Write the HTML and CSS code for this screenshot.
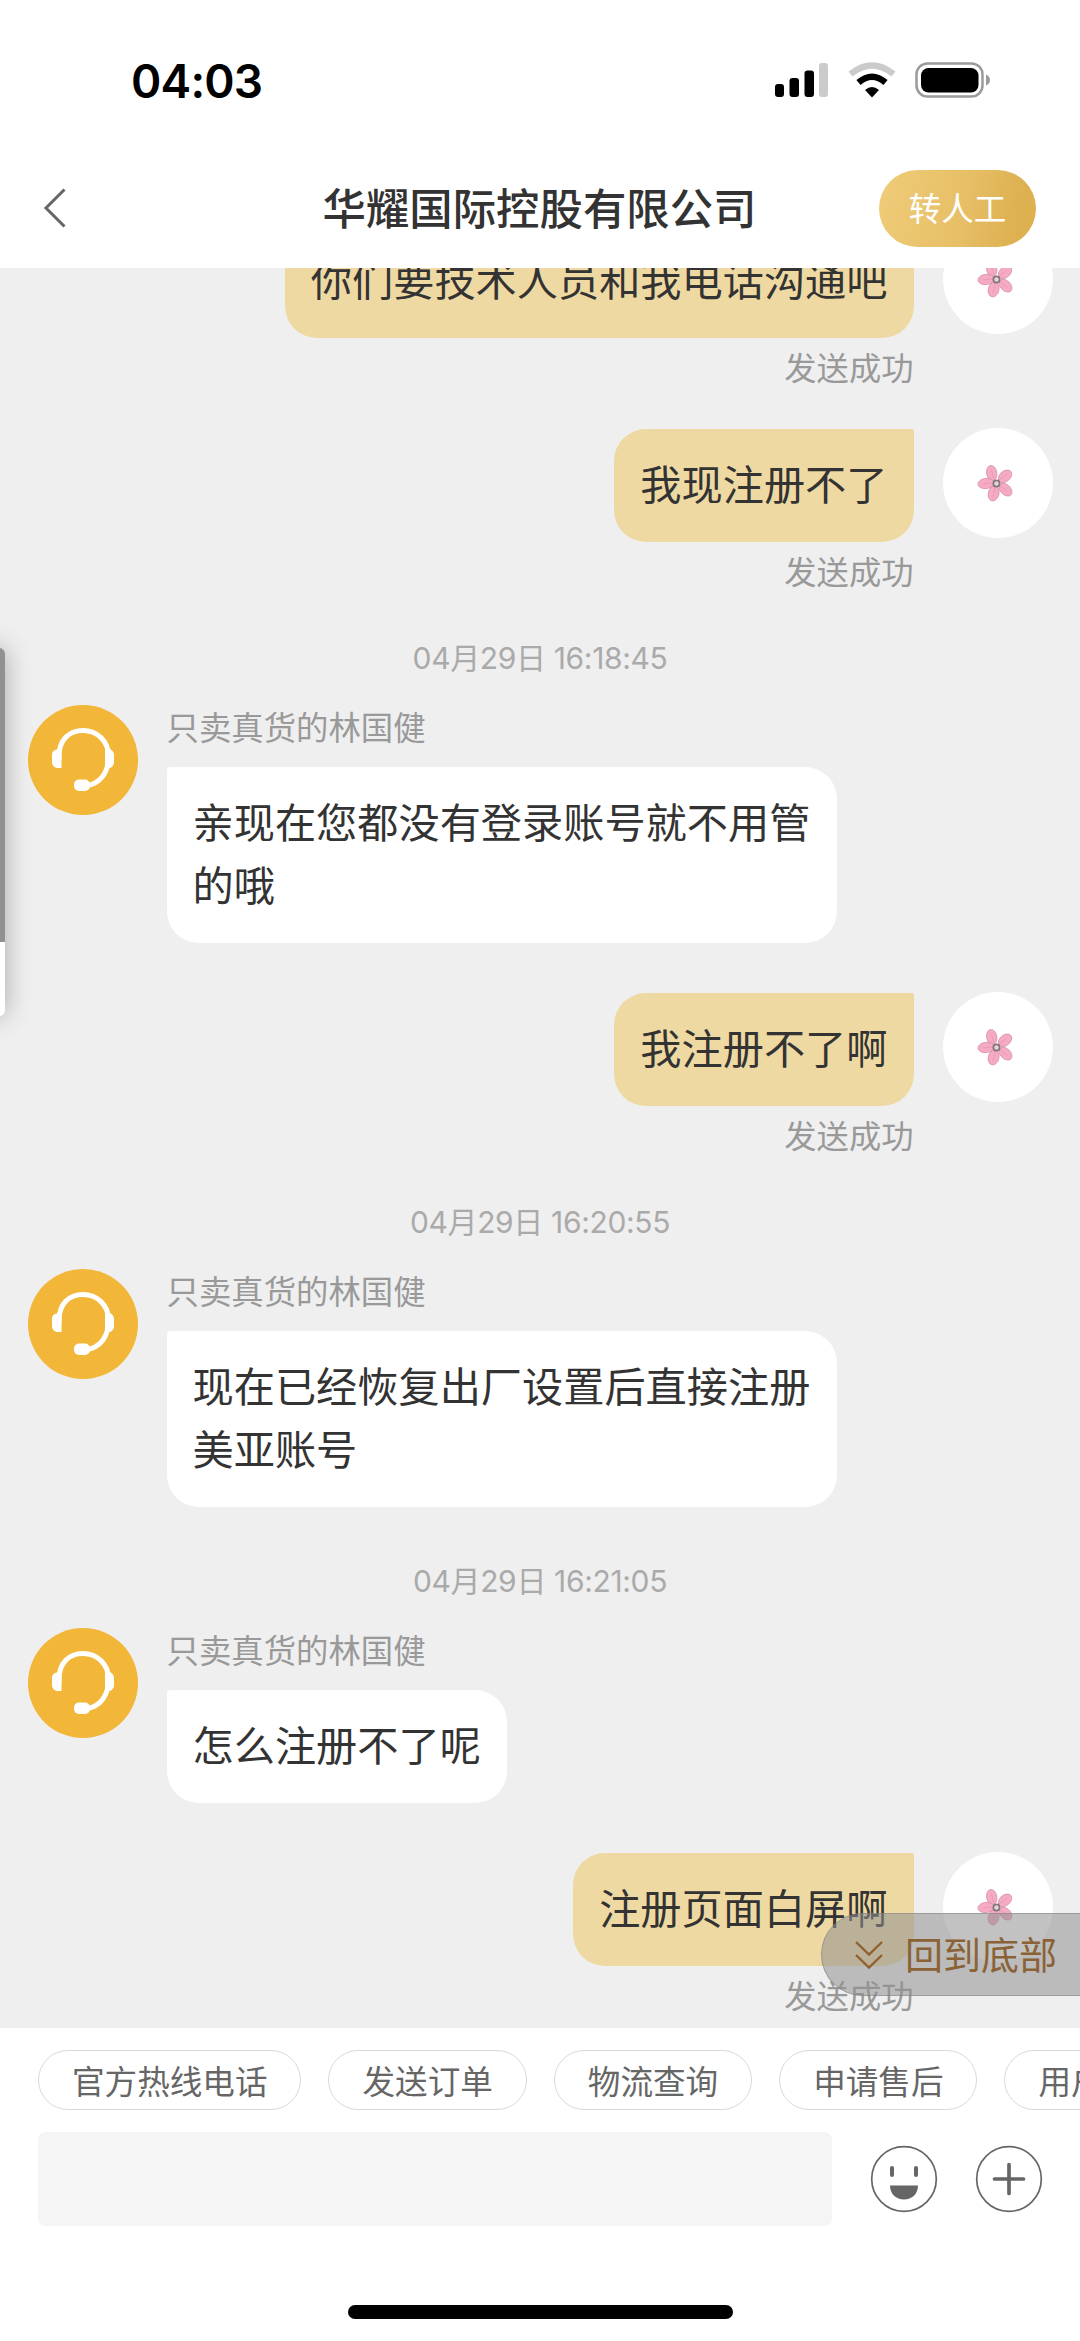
FILE: index.html
```html
<!DOCTYPE html>
<html lang="zh-CN">
<head>
<meta charset="utf-8">
<title>华耀国际控股有限公司</title>
<link rel="stylesheet" href="styles.css">
</head>
<body>
<svg class="defs" aria-hidden="true">
  <symbol id="headset" viewBox="0 0 110 110">
    <path d="M31 55V51C31 35 41 25.500 55 25.500S80.500 36 80.500 51C80.500 67 73 79 57 81" fill="none" stroke="#fff" stroke-width="5"/>
    <path d="M33.500 44V63H29Q24 62 24 57V50Q24 45 29 44.500ZM77 44H82Q86 46 86 50V57Q86 61 82 63H77Z" fill="#fff"/>
    <rect x="46" y="74.500" width="16" height="11.500" rx="5" fill="#fff"/>
  </symbol>
  <symbol id="flower" viewBox="0 0 40 40">
    <g fill="#f5abc3" stroke="#d58fa6" stroke-width=".8">
      <ellipse cx="15.500" cy="9.500" rx="5.400" ry="8" transform="rotate(-10 15.500 9.500)"/>
      <ellipse cx="29.500" cy="13" rx="5.500" ry="8" transform="rotate(50 29.500 13)"/>
      <ellipse cx="30" cy="27" rx="5.300" ry="8" transform="rotate(-46 30 27)"/>
      <ellipse cx="17.500" cy="31" rx="5.600" ry="8" transform="rotate(14 17.500 31)"/>
      <ellipse cx="9.500" cy="20.500" rx="5.400" ry="8.500" transform="rotate(84 9.500 20.500)"/>
    </g>
    <g stroke="#e797b0" stroke-width=".8" fill="none"><path d="M15 6L18 16M31 11L23 17M32 29L23 22M17 35L19 24M6 21L17 20"/></g>
    <circle cx="20.500" cy="20.500" r="3.300" fill="#e2d5da" stroke="#85727a" stroke-width="1.800"/>
  </symbol>
</svg>
<div class="screen">
  <header class="top">
    <div class="status-bar">
      <span class="clock">04:03</span>
      <svg class="indicators" width="218" height="38" viewBox="0 0 218 38">
        <rect x="1" y="22" width="9" height="13" rx="3"/>
        <rect x="15.500" y="16" width="9.500" height="19" rx="3"/>
        <rect x="30.500" y="8.500" width="9.500" height="26.500" rx="3"/>
        <rect x="45" y="1" width="9" height="34" rx="3" fill="#cbcbcb"/>
        <path d="M76.500 12Q98 -5 119.500 12" fill="none" stroke="#cbcbcb" stroke-width="6.500"/>
        <path d="M84.500 20.500Q98 9 111.500 20.500" fill="none" stroke="#000" stroke-width="6.500"/>
        <path d="M91 28Q98 22 105 28L98 35.500Z"/>
        <rect x="142.500" y="1.500" width="66" height="33" rx="11" fill="none" stroke="#9b9b9b" stroke-width="2.500"/>
        <rect x="147" y="6" width="57.500" height="24.500" rx="7.500"/>
        <path d="M212 12.500Q216 14.500 216 18T212 23.500Z" fill="#9b9b9b"/>
      </svg>
    </div>
    <div class="nav">
      <svg class="back" width="24" height="40" viewBox="0 0 24 40"><path d="M21.500 1.500L3 20L21.500 38.500" fill="none" stroke="#666" stroke-width="3"/></svg>
      <h1 class="title">华耀国际控股有限公司</h1>
      <button class="human">转人工</button>
    </div>
  </header>

  <main class="chat">
    <div class="log">
      <div class="msg mine">
        <div class="content"><p class="bubble">你们要技术人员和我电话沟通吧</p><span class="sent">发送成功</span></div>
        <div class="avatar"><svg width="38" height="38"><use href="#flower"/></svg></div>
      </div>
      <div class="msg mine">
        <div class="content"><p class="bubble">我现注册不了</p><span class="sent">发送成功</span></div>
        <div class="avatar"><svg width="38" height="38"><use href="#flower"/></svg></div>
      </div>
      <time class="stamp">04月29日 16:18:45</time>
      <div class="msg agent">
        <div class="avatar"><svg width="110" height="110"><use href="#headset"/></svg></div>
        <div class="content"><span class="name">只卖真货的林国健</span><p class="bubble">亲现在您都没有登录账号就不用管的哦</p></div>
      </div>
      <div class="msg mine">
        <div class="content"><p class="bubble">我注册不了啊</p><span class="sent">发送成功</span></div>
        <div class="avatar"><svg width="38" height="38"><use href="#flower"/></svg></div>
      </div>
      <time class="stamp">04月29日 16:20:55</time>
      <div class="msg agent">
        <div class="avatar"><svg width="110" height="110"><use href="#headset"/></svg></div>
        <div class="content"><span class="name">只卖真货的林国健</span><p class="bubble">现在已经恢复出厂设置后直接注册美亚账号</p></div>
      </div>
      <time class="stamp">04月29日 16:21:05</time>
      <div class="msg agent">
        <div class="avatar"><svg width="110" height="110"><use href="#headset"/></svg></div>
        <div class="content"><span class="name">只卖真货的林国健</span><p class="bubble">怎么注册不了呢</p></div>
      </div>
      <div class="msg mine">
        <div class="content"><p class="bubble">注册页面白屏啊</p><span class="sent">发送成功</span></div>
        <div class="avatar"><svg width="38" height="38"><use href="#flower"/></svg></div>
      </div>
    </div>
    <div class="side-panel"></div>
    <button class="to-bottom">
      <svg width="28" height="30" viewBox="0 0 28 30"><path d="M1 2L14 14.500L27 2M1 15L14 27.500L27 15" fill="none" stroke="#8f6131" stroke-width="2.400"/></svg>
      <span>回到底部</span>
    </button>
  </main>

  <footer class="composer">
    <div class="chips">
      <span class="chip">官方热线电话</span><span class="chip">发送订单</span><span class="chip">物流查询</span><span class="chip">申请售后</span><span class="chip">用户反馈</span>
    </div>
    <div class="entry">
      <div class="field"></div>
      <svg class="emoji" width="68" height="68" viewBox="0 0 68 68"><circle cx="34" cy="34" r="32.300" fill="none" stroke="#666" stroke-width="1.700"/><path d="M22 23V30M46 23V30" stroke="#666" stroke-width="4" stroke-linecap="round"/><path d="M20 40.500H48C48 49 42 54.500 34 54.500S20 49 20 40.500Z" fill="#666"/></svg>
      <svg class="plus" width="68" height="68" viewBox="0 0 68 68"><circle cx="34" cy="34" r="32.300" fill="none" stroke="#666" stroke-width="1.700"/><path d="M34 19.500V48.500M19.500 34H48.500" stroke="#666" stroke-width="3.700" stroke-linecap="round"/></svg>
    </div>
    <div class="home-bar"></div>
  </footer>
</div>
</body>
</html>
```
FILE: styles.css
```css
* { box-sizing: border-box; }
body { margin: 0; background: #fff; color: #333; font-family: "Noto Sans CJK SC", sans-serif; }
p, h1 { margin: 0; }
button { border: 0; font-family: inherit; }
svg { display: block; flex: none; }
.defs { position: absolute; width: 0; height: 0; }
.screen { display: flex; flex-direction: column; width: 1080px; height: 2341px; overflow: hidden; }

.top { height: 268px; flex: none; background: #fff; }
.status-bar { display: flex; justify-content: space-between; align-items: center; height: 161px; padding: 0 88px 0 131px; }
.clock { color: #000; font: 600 46px/1 Inter, sans-serif; letter-spacing: -0.8px; }
.nav { display: flex; align-items: center; justify-content: space-between; height: 94px; padding: 0 44px 0 43px; }
.back { margin-right: 133px; }
.title { padding-bottom: 5px; font-size: 43.400px; line-height: 60px; font-weight: 500; white-space: nowrap; }
.human { width: 157px; height: 77px; padding: 0 0 3px; border-radius: 39px; background: linear-gradient(100deg, #f0cc79, #e6be65 55%, #ddb050 88%); color: #fff; font-size: 32.500px; line-height: 74px; }

.chat { position: relative; display: flex; flex-direction: column; height: 1760px; flex: none; overflow: hidden; background: #efefef; }
.log { margin-top: -44px; }
.msg { display: flex; gap: 29px; padding: 0 27.500px; margin-bottom: 48.500px; }
.mine { justify-content: flex-end; height: 155.500px; }
.avatar { display: flex; align-items: center; justify-content: center; flex: none; width: 110px; height: 110px; border-radius: 50%; background: #fff; }
.mine .avatar svg { margin-right: 3px; }
.agent .avatar { background: #f2b638; }
.content { display: flex; flex-direction: column; }
.mine .content { align-items: flex-end; padding-top: 1px; }
.agent .content { align-items: flex-start; }
.bubble { max-width: 670px; padding: 22px 26px 28px; background: #fff; border-radius: 4px 32px 32px 32px; font-size: 41.200px; line-height: 63px; }
.mine .bubble { background: #efd9a3; border-radius: 32px 2px 32px 32px; }
.sent { margin-top: 16px; color: #999; font-size: 32.300px; line-height: 24px; }
.name { padding-bottom: 4px; margin-bottom: 16px; color: #999; font-size: 32.400px; line-height: 42px; }
.stamp { display: block; padding-bottom: 20px; color: #aaa; text-align: center; font-family: Inter, "Noto Sans CJK SC", sans-serif; font-size: 30px; line-height: 53px; letter-spacing: -0.35px; }

.side-panel { position: absolute; left: -20px; top: 380px; width: 25px; height: 368px; border-radius: 6px; background: linear-gradient(#919191 294px, #fff 294px); box-shadow: 0 0 26px rgba(0, 0, 0, .3); }
.to-bottom { position: absolute; right: -1px; top: 1645px; display: flex; align-items: center; gap: 22px; width: 260px; height: 83px; padding: 0 0 0 33px; border: 1px solid rgba(125, 125, 125, .5); border-radius: 42px 0 0 42px; background: rgba(144, 144, 144, .55); color: #8a6236; font-size: 38px; white-space: nowrap; }
.to-bottom span { padding-bottom: 5px; }

.composer { height: 313px; background: #fff; }
.chips { display: flex; gap: 27px; padding: 22px 0 22px 38px; overflow: hidden; }
.chip { flex: none; height: 60px; padding: 0 33px; border: 1px solid #d9d9d9; border-radius: 30px; color: #666; font-size: 32.600px; line-height: 57px; white-space: nowrap; }
.entry { display: flex; align-items: center; height: 94px; padding-left: 38px; }
.field { width: 794px; height: 94px; border-radius: 8px; background: #f5f5f5; }
.emoji { margin-left: 38px; }
.plus { margin-left: 36.500px; }
.home-bar { width: 385px; height: 14px; margin: 79px 0 0 348px; border-radius: 7px; background: #000; }
```
